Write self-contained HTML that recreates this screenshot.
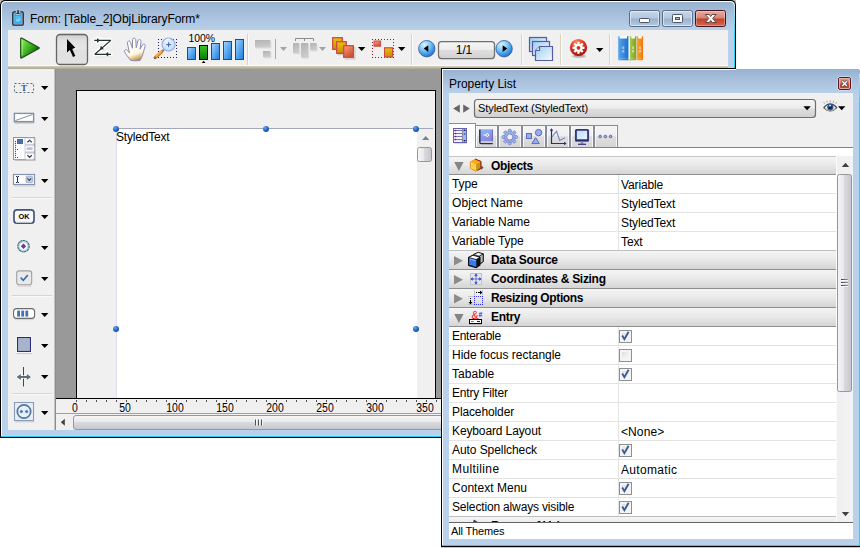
<!DOCTYPE html>
<html lang="en">
<head>
<meta charset="utf-8">
<title>Form: [Table_2]ObjLibraryForm*</title>
<style>

html,body{margin:0;padding:0;}
body{width:860px;height:548px;position:relative;overflow:hidden;background:#fff;font-family:"Liberation Sans",sans-serif;font-size:12px;color:#000;}
.abs,.abs *{position:absolute;box-sizing:border-box;}
.abs svg{overflow:visible;left:0;top:0;}
.t{white-space:nowrap;line-height:14px;letter-spacing:-0.12px;}
.b{font-weight:bold;letter-spacing:-0.3px;}
/* ---------- form window ---------- */
#fw{left:0;top:0;width:736px;height:438px;background:#000;border-radius:5px 5px 0 0;}
#fw .fr{left:1px;top:1px;width:734px;height:436px;border-radius:4.5px 4.5px 0 0;background:#fff;}
#fw .fr2{left:2px;top:2px;width:732px;height:434px;border-radius:4px 4px 0 0;background:linear-gradient(180deg,#98b3d2 0px,#a9c1dd 14px,#b7cee7 26px,#b9d1ea 30px,#b9d1ea 100%);}
#fw .cy{left:1px;top:436px;width:734px;height:1px;background:#27d0ee;}
#fw .cyr{left:734px;top:6px;width:1px;height:431px;background:linear-gradient(180deg,#b9e4f4 0,#27d0ee 30px,#27d0ee 100%);}
#fcontent{left:8px;top:30px;width:720px;height:400px;background:#f0f0f0;overflow:hidden;}
.capbtn{top:10px;height:17px;border:1px solid #5a6d85;border-radius:2.5px;background:linear-gradient(180deg,#c6d6e8 0,#b4c8de 47%,#9ab2cd 53%,#b4cae3 100%);box-shadow:inset 0 0 0 1px rgba(255,255,255,.5);}
.capbtn.close{border-color:#431422;background:linear-gradient(180deg,#e8aa9d 0,#d88574 47%,#c1412a 53%,#d4694e 100%);box-shadow:inset 0 0 0 1px rgba(255,255,255,.3);}
.sep{top:4px;width:2px;height:31px;background:linear-gradient(90deg,#d9d3c0 0,#d9d3c0 50%,#fbfbfb 50%,#fbfbfb 100%);}
.hsep{left:4px;width:40px;height:1px;background:#ddd6c2;box-shadow:0 1px 0 #fafafa;}
/* ---------- property window ---------- */
#pw{left:441px;top:68px;width:420px;height:479px;background:#000;}
#pw .fr{left:1px;top:1px;width:418px;height:477px;background:#fff;}
#pw .fr2{left:2px;top:2px;width:417px;height:476px;background:linear-gradient(180deg,#98b3d2 0px,#aec5e0 14px,#b9d1ea 25px,#b9d1ea 100%);}
#pw .cy{left:1px;top:477px;width:418px;height:1px;background:#27d0ee;}
#pw .cyr{left:418px;top:6px;width:1px;height:472px;background:linear-gradient(180deg,#b9e4f4 0,#27d0ee 30px,#27d0ee 100%);}
#pcontent{left:8px;top:25px;width:404px;height:446px;background:#f0f0f0;overflow:hidden;}
.row{left:0;width:387px;height:19px;border-bottom:1px solid #e3e3e3;background:#fff;}
.row .k{left:3px;top:2px;}
.row .v{left:172px;top:3px;}
.row .vs{left:169px;top:0;width:1px;height:18px;background:#e3e3e3;}
.hdr{left:0;width:387px;height:19px;background:linear-gradient(180deg,#f4f4f4 0,#eaeaea 45%,#d5d5d5 100%);border-bottom:1px solid #8f8f8f;}
.hdr .k{left:42px;top:2px;}
.hdr.first{border-top:1px solid #c6c6c6;}
.hdr.first .k{top:2px;}
.row.last{border-bottom-color:#bfbfbf;}
.cb{left:170px;top:3px;width:13px;height:13px;border:1px solid #8e8f8f;background:linear-gradient(135deg,#d4d7da 0,#eceeef 50%,#fdfdfd 100%);box-shadow:inset 0 0 0 2px #f4f4f4;}
.tab{top:32px;height:23px;border:1px solid #858c9c;border-bottom:none;background:linear-gradient(180deg,#f4f4f4 0,#efefef 44%,#dfdfdf 48%,#d4d4d4 100%);box-shadow:inset 1px 0 0 rgba(255,255,255,.75),inset -1px 0 0 rgba(255,255,255,.75);}

</style>
</head>
<body>
<!-- =============== FORM WINDOW =============== -->
<div class="abs" style="left:0;top:0;width:3px;height:3px;background:#bdbdbd;"></div>
<div class="abs" style="left:733px;top:0;width:3px;height:3px;background:#bdbdbd;"></div>
<div id="fw" class="abs">
  <div class="fr"></div><div class="fr2"></div><div class="cy"></div><div class="cyr"></div>
  <div class="t" style="left:30px;top:12px;letter-spacing:-0.05px;">Form: [Table_2]ObjLibraryForm*</div>
  <div class="capbtn" style="left:629px;width:31px;"></div>
  <div class="capbtn" style="left:662px;width:31px;"></div>
  <div class="capbtn close" style="left:695px;width:31px;"></div>
  <div id="fcontent">
    <!-- toolbar bottom edge -->
    <div style="left:0;top:35px;width:720px;height:1px;background:#fcfcfc;"></div>
    <div style="left:0;top:36px;width:720px;height:3px;background:linear-gradient(180deg,#d2ceb9 0,#bfbba6 50%,#a8a493 100%);"></div>
    <!-- gray work area -->
    <div style="left:48px;top:39px;width:680px;height:330px;background:#999;"></div>
    <!-- page -->
    <div style="left:68px;top:60px;width:360px;height:310px;background:#f0f0f0;border:1px solid #000;border-bottom:none;"></div>
    <!-- text object -->
    <div style="left:108px;top:98px;width:317px;height:272px;background:#f0f0f0;border-top:1px solid #a4a8bc;"></div>
    <div style="left:108px;top:99px;width:301px;height:271px;background:#fff;border-left:1px solid #dcdcec;"></div>
    <div class="t" style="left:108px;top:100px;letter-spacing:-0.2px;">StyledText</div>
    <!-- palette separator -->
    <div style="left:46px;top:39px;width:2px;height:361px;background:linear-gradient(90deg,#c2c2c2 0,#c2c2c2 50%,#8e8e8e 50%,#8e8e8e 100%);"></div>
    <div class="hsep" style="top:167px;"></div>
    <div class="hsep" style="top:265px;"></div>
    <div class="hsep" style="top:363px;"></div>
    <!-- toolbar separators -->
    <div class="sep" style="left:239px;"></div>
    <div class="sep" style="left:403px;"></div>
    <div class="sep" style="left:513px;"></div>
    <div class="sep" style="left:552px;"></div>
    <div class="sep" style="left:601px;"></div>
    <!-- ruler -->
    <div style="left:48px;top:368px;width:680px;height:16px;background:#f0f0f0;border-top:1px solid #000;border-bottom:1px solid #a0a0a0;"></div>
    <!-- hscroll -->
    <div style="left:48px;top:384px;width:680px;height:16px;background:#f0f0f0;"></div>
  </div>
  <svg width="736" height="438" viewBox="0 0 736 438">
  
<defs>
<linearGradient id="gplay" x1="0" y1="0.1" x2="0.9" y2="0.75"><stop offset="0" stop-color="#8eec5c"/><stop offset="0.4" stop-color="#4cc02c"/><stop offset="0.8" stop-color="#238a14"/><stop offset="1" stop-color="#14680c"/></linearGradient>
<linearGradient id="gbar" x1="0" y1="0" x2="1" y2="1"><stop offset="0" stop-color="#a6d6ff"/><stop offset="0.5" stop-color="#5aa8f0"/><stop offset="1" stop-color="#1f78d8"/></linearGradient>
<linearGradient id="ggreen" x1="0" y1="0" x2="0" y2="1"><stop offset="0" stop-color="#35c420"/><stop offset="1" stop-color="#0a7a08"/></linearGradient>
<linearGradient id="gyel" x1="0" y1="0" x2="0.3" y2="1"><stop offset="0" stop-color="#f6c800"/><stop offset="1" stop-color="#c68e00"/></linearGradient>
<linearGradient id="gora" x1="0" y1="0" x2="0.6" y2="1"><stop offset="0" stop-color="#faa27e"/><stop offset="1" stop-color="#d0502c"/></linearGradient>
<radialGradient id="gblue" cx="0.36" cy="0.26" r="0.85"><stop offset="0" stop-color="#d6f6ff"/><stop offset="0.35" stop-color="#8ad0f8"/><stop offset="0.7" stop-color="#3a96e4"/><stop offset="1" stop-color="#1260bc"/></radialGradient>
<radialGradient id="gred" cx="0.4" cy="0.2" r="0.85"><stop offset="0" stop-color="#fc8c5c"/><stop offset="0.45" stop-color="#e23a1c"/><stop offset="1" stop-color="#9c0a0a"/></radialGradient>
<radialGradient id="gh" cx="0.35" cy="0.3" r="0.8"><stop offset="0" stop-color="#6aa6ee"/><stop offset="0.6" stop-color="#1f62c4"/><stop offset="1" stop-color="#154a9c"/></radialGradient>
<linearGradient id="gpage" x1="0" y1="0" x2="1" y2="1"><stop offset="0" stop-color="#9ccdf0"/><stop offset="0.55" stop-color="#cfe7f8"/><stop offset="1" stop-color="#f2faff"/></linearGradient>
<linearGradient id="gbtn" x1="0" y1="0" x2="0" y2="1"><stop offset="0" stop-color="#f6f6f6"/><stop offset="0.48" stop-color="#ededed"/><stop offset="0.52" stop-color="#dedede"/><stop offset="1" stop-color="#d2d2d2"/></linearGradient>
<linearGradient id="gthumbh" x1="0" y1="0" x2="0" y2="1"><stop offset="0" stop-color="#f7f7f7"/><stop offset="0.45" stop-color="#e9e9ec"/><stop offset="0.5" stop-color="#d9dade"/><stop offset="1" stop-color="#c5c7cd"/></linearGradient>
<linearGradient id="gthumbv" x1="0" y1="0" x2="1" y2="0"><stop offset="0" stop-color="#f7f7f7"/><stop offset="0.45" stop-color="#e9e9ec"/><stop offset="0.5" stop-color="#d9dade"/><stop offset="1" stop-color="#c5c7cd"/></linearGradient>
<linearGradient id="gbk1" x1="0" y1="0" x2="1" y2="0"><stop offset="0" stop-color="#5aa6ec"/><stop offset="1" stop-color="#1b6fcc"/></linearGradient>
<linearGradient id="gbk2" x1="0" y1="0" x2="1" y2="0"><stop offset="0" stop-color="#a6cc48"/><stop offset="1" stop-color="#78a020"/></linearGradient>
<linearGradient id="gbk3" x1="0" y1="0" x2="1" y2="0"><stop offset="0" stop-color="#ffa030"/><stop offset="1" stop-color="#f07808"/></linearGradient>
<linearGradient id="ghand" x1="0.2" y1="0" x2="0.5" y2="1"><stop offset="0" stop-color="#fffce0"/><stop offset="0.35" stop-color="#ffffff"/><stop offset="0.72" stop-color="#fdf8e4"/><stop offset="0.9" stop-color="#dcb878"/><stop offset="1" stop-color="#b88c48"/></linearGradient>
<radialGradient id="glens" cx="0.45" cy="0.4" r="0.65"><stop offset="0" stop-color="#e8f6ff"/><stop offset="0.7" stop-color="#c4e4ff"/><stop offset="1" stop-color="#acd0fc"/></radialGradient>
<linearGradient id="gdis" x1="0" y1="0" x2="0.3" y2="1"><stop offset="0" stop-color="#b2b2b2"/><stop offset="1" stop-color="#cbcbcb"/></linearGradient>
<linearGradient id="gsel" x1="0" y1="0" x2="0" y2="1"><stop offset="0" stop-color="#cfcfcf"/><stop offset="0.2" stop-color="#e0e0e0"/><stop offset="0.48" stop-color="#e6e6e6"/><stop offset="0.52" stop-color="#e0e0e0"/><stop offset="1" stop-color="#e2e2e2"/></linearGradient>
</defs>

  <rect x="14.3" y="13.1" width="7.4" height="10.7" fill="#2aa8ea"/><rect x="16" y="12.6" width="4" height="2.4" fill="#a9c2de"/>
<rect x="15.4" y="16" width="5.2" height="6.4" fill="#52bcf0"/><path d="M16.4,19.6 l1.3,1.4 l2.3,-2.6" stroke="#d2eeff" stroke-width="0.9" fill="none"/>
<path d="M15.9,11.8 H14 Q12.8,11.8 12.8,13 V23.9 Q12.8,25.1 14,25.1 H22 Q23.2,25.1 23.2,23.9 V13 Q23.2,11.8 22,11.8 H20.3" fill="none" stroke="#1f2327" stroke-width="1.3"/>
<path d="M17.3,10.2 h1.6 v3 h1 v0.9 h-3.8 v-0.9 h1.2z" fill="#2c3034"/>
<rect x="639.5" y="18.5" width="10" height="4" rx="0.8" fill="#fff" stroke="#4c5666"/>
<rect x="672.5" y="14.5" width="10" height="8" rx="0.8" fill="#fff" stroke="#4c5666"/><rect x="675.5" y="17.5" width="4" height="2" fill="#a8bcd4" stroke="#4c5666"/>
<path d="M705.3,14.5 h3.9 l1.5,2 l1.5,-2 h3.9 l-3.5,4 l3.5,4 h-3.9 l-1.5,-2 l-1.5,2 h-3.9 l3.5,-4 z" fill="#fff" stroke="#4c3a40" stroke-width="0.9" stroke-linejoin="round"/>
  <path d="M21.3,38.6 L38.6,48 L21.3,57.4 Z" fill="url(#gplay)" stroke="#184a10" stroke-width="2.4" stroke-linejoin="round"/>
<path d="M21.5,38.9 L38.2,48 L21.5,57.1 Z" fill="url(#gplay)" stroke="url(#gplay)" stroke-width="0.6" stroke-linejoin="round"/>
<path d="M22.3,40.6 V55" stroke="#a8f478" stroke-width="1" opacity="0.75"/>
<rect x="56.5" y="34.5" width="31" height="30" rx="3.5" fill="url(#gsel)" stroke="#646464" stroke-width="1.3"/>
<path d="M67.6,39.6 L67.6,53.1 L70.5,50.5 L73.6,57.6 L76,56.5 L72.9,49.6 L75.9,48.4 Z" fill="#fff" opacity="0.7"/>
<path d="M67,39 L67,52.5 L69.9,49.9 L73,57 L75.4,55.9 L72.3,49 L75.3,47.8 Z" fill="#000"/>
<g stroke="#fff" stroke-width="4.2" fill="none" stroke-linejoin="round" stroke-linecap="round" opacity="0.95"><path d="M94.5,40.4 H110.6 L94.8,54.3 H110.8"/><path d="M97.4,38.4 v4.2 M107.8,52.2 v4.2"/></g>
<path d="M95.5,57 H111" stroke="#c8c8c8" stroke-width="1" opacity="0.45"/>
<g stroke="#273232" stroke-width="1.25" fill="none" stroke-linejoin="bevel"><path d="M94.2,40.4 H110.8 L94.8,54.3 H111"/></g>
<g fill="#273232"><path d="M99.8,40.4 L97,37.9 V42.9 Z"/><path d="M99.8,49.8 L103.9,49.3 L100.9,45.8 Z"/><path d="M105.4,54.3 L108.2,51.8 V56.8 Z"/></g>
<path d="M130.6,60.3 C128,57 125.8,54.2 124.7,52 C123.9,50.2 125.9,48.9 127.4,50.4 L129.4,52.8 L127.4,43 C127,40.9 129.9,40.2 130.5,42.3 L132.4,48.2 L132.5,39.8 C132.5,37.6 135.7,37.6 135.8,39.8 L136.2,47.8 L137.9,40.9 C138.4,38.8 141.3,39.4 141,41.5 L140,49.2 L142.4,45 C143.4,43.2 145.8,44.2 145.1,46.2 C143.9,50 143.3,53 142.4,55.6 C141.7,57.6 140.8,59 140.2,60.3 C137,60.9 133.6,60.9 130.6,60.3 Z" fill="url(#ghand)" stroke="#8a8ab4" stroke-width="1" stroke-linejoin="round"/>
<g stroke="#1c1c5c" stroke-width="1" stroke-dasharray="1,2" fill="none"><path d="M158,39.5 H177"/><path d="M158,57.5 H177"/><path d="M158.5,39 V58"/><path d="M176.5,39 V58"/></g>
<path d="M163.4,50.2 L161.6,51.8" stroke="#8c8c94" stroke-width="2.4" stroke-linecap="round"/>
<path d="M161.6,51.8 L155.2,57.6" stroke="#c87414" stroke-width="3" stroke-linecap="round"/><path d="M161.4,51.5 L155.3,57" stroke="#ffac3c" stroke-width="1.7" stroke-linecap="round"/>
<path d="M155.2,57.6 L154.8,58" stroke="#74706c" stroke-width="2.2" stroke-linecap="round"/>
<circle cx="168.6" cy="44.6" r="6.5" fill="url(#glens)" stroke="#9cacdc" stroke-width="1.1"/>
<path d="M164.8,41.6 q1.6,-2.6 4.6,-2.6" stroke="#fff" stroke-width="1.4" fill="none" opacity="0.9"/>
<path d="M166.2,44.6 h5 M168.7,42.1 v5" stroke="#3c4c84" stroke-width="0.9"/>
<rect x="187.5" y="47.5" width="8" height="12" fill="url(#gbar)" stroke="#1848a8"/>
<rect x="211.5" y="43.5" width="8" height="16" fill="url(#gbar)" stroke="#1848a8"/>
<rect x="223.5" y="41.5" width="8" height="18" fill="url(#gbar)" stroke="#1848a8"/>
<rect x="235.5" y="39.5" width="8" height="20" fill="url(#gbar)" stroke="#1848a8"/>
<rect x="199.5" y="45.5" width="8" height="14" fill="url(#ggreen)" stroke="#000"/>
<path d="M201.8,63 h3.6 l-1.8,-2.2 z" fill="#000"/>
<g fill="#dedede"><rect x="256" y="41" width="15.4" height="7.6"/><rect x="264" y="52" width="7.4" height="6.4"/></g>
<g fill="url(#gdis)"><rect x="255" y="40" width="15.4" height="7.4"/><rect x="263" y="51" width="7.4" height="6.2"/></g>
<path d="M275.5,39 v20" stroke="#a8a8a8"/>
<path d="M280,47 h7 l-3.5,4 z" fill="#a4a4a4"/>
<path d="M295.5,41 v-2.5 h18 v2.5 M304.5,38.5 v2.5" stroke="#8c8c8c" fill="none"/>
<g fill="#dedede"><rect x="294" y="44" width="6.2" height="10.4"/><rect x="302" y="44" width="7.2" height="14.6"/><rect x="311.2" y="44" width="6.4" height="7.6"/></g>
<g fill="url(#gdis)"><rect x="293" y="43" width="6.2" height="10.2"/><rect x="301" y="43" width="7.2" height="14.6"/><rect x="310.2" y="43" width="6.4" height="7.4"/></g>
<path d="M319,47 h7 l-3.5,4 z" fill="#a4a4a4"/>
<path d="M343.8,50.2 v4.4 h-6.2 M354.8,47 v11.8 h-10" stroke="#b8b8b8" stroke-width="1.2" fill="none" opacity="0.7"/>
<rect x="332.7" y="37.7" width="9.6" height="11.6" fill="url(#gyel)" stroke="#ca4a48" stroke-width="1.3"/>
<rect x="336.7" y="41.7" width="9.6" height="11.6" fill="url(#gyel)" stroke="#ca4a48" stroke-width="1.3"/>
<rect x="343.7" y="45.7" width="9.6" height="11.6" fill="url(#gora)" stroke="#ca4a48" stroke-width="1.3"/>
<path d="M358,47 h7.4 l-3.7,4 z" fill="#000"/>
<g stroke="#a81414" stroke-width="1" stroke-dasharray="1,2" fill="none"><path d="M372,39.5 H394"/><path d="M372,57.5 H394"/><path d="M372.5,39 V58"/><path d="M393.5,39 V58"/></g>
<rect x="374" y="41" width="6.6" height="5.2" fill="url(#gora)" stroke="#ca4a48" stroke-width="1"/>
<rect x="384.6" y="47.8" width="8" height="9.2" fill="url(#gyel)" stroke="#ca4a48" stroke-width="1.2"/>
<path d="M398,47 h7.4 l-3.7,4 z" fill="#000"/>
<circle cx="426.8" cy="48.7" r="8.2" fill="url(#gblue)" stroke="#3c54a4" stroke-width="0.8"/>
<path d="M428.3,45.2 v6.8 l-4.6,-3.4 z" fill="#000"/>
<rect x="438.5" y="41.5" width="56" height="17" rx="3" fill="url(#gbtn)" stroke="#6e6e6e" stroke-width="1.25"/>
<circle cx="504.1" cy="48.7" r="8.2" fill="url(#gblue)" stroke="#3c54a4" stroke-width="0.8"/>
<path d="M502.6,45.2 v6.8 l4.6,-3.4 z" fill="#000"/>
<g fill="url(#gpage)" stroke="#5a5aa2" stroke-width="1.2"><rect x="529.5" y="37.5" width="17" height="14"/><rect x="532.5" y="41.5" width="17" height="14"/><path d="M539.5,46.5 H552.5 V60.5 H535.5 V50.5 Z"/><path d="M535.5,50.5 h4 v-4" fill="#d8ecff"/></g>
<ellipse cx="579" cy="56.2" rx="7.4" ry="2" fill="#000" opacity="0.14"/><ellipse cx="579" cy="56" rx="5.6" ry="1.4" fill="#000" opacity="0.14"/>
<circle cx="578.5" cy="47.5" r="8.6" fill="url(#gred)"/>
<g fill="#fff"><rect x="577.35" y="41.80" width="2.3" height="3" transform="rotate(0 578.5 47.8)"/><rect x="577.35" y="41.80" width="2.3" height="3" transform="rotate(45 578.5 47.8)"/><rect x="577.35" y="41.80" width="2.3" height="3" transform="rotate(90 578.5 47.8)"/><rect x="577.35" y="41.80" width="2.3" height="3" transform="rotate(135 578.5 47.8)"/><rect x="577.35" y="41.80" width="2.3" height="3" transform="rotate(180 578.5 47.8)"/><rect x="577.35" y="41.80" width="2.3" height="3" transform="rotate(225 578.5 47.8)"/><rect x="577.35" y="41.80" width="2.3" height="3" transform="rotate(270 578.5 47.8)"/><rect x="577.35" y="41.80" width="2.3" height="3" transform="rotate(315 578.5 47.8)"/><circle cx="578.5" cy="47.8" r="4.1"/></g>
<circle cx="578.5" cy="47.8" r="1.9" fill="#d8301c"/>
<path d="M596,48 h7.4 l-3.7,4 z" fill="#000"/>
<ellipse cx="629.5" cy="60" rx="2" ry="0.9" fill="#000" opacity="0.15"/>
<rect x="619.4" y="36.2" width="7.8" height="2.6" fill="#fff"/><path d="M618.2,36.3 h1.4 V38.4 h7.4 V36.3 h1.4 V59.2 q0,1.1 -1.1,1.1 h-8.0 q-1.1,0 -1.1,-1.1 Z" fill="url(#gbk1)"/><path d="M622.3,46.6 h2 v2.4 h-2z M622.3,50 h2 v2.4 h-2z" fill="#fff" opacity="0.5"/><path d="M619.0,58.6 h8.6" stroke="#fff" stroke-width="1" opacity="0.22"/>
<rect x="631.2" y="36.2" width="3.9" height="2.6" fill="#fff"/><path d="M630,36.3 h1.4 V38.4 h3.5 V36.3 h1.4 V59.2 q0,1.1 -1.1,1.1 h-4.1 q-1.1,0 -1.1,-1.1 Z" fill="url(#gbk2)"/><path d="M632.1,46.6 h2 v2.4 h-2z M632.1,50 h2 v2.4 h-2z" fill="#fff" opacity="0.5"/><path d="M630.8,58.6 h4.7" stroke="#fff" stroke-width="1" opacity="0.22"/>
<rect x="638.0" y="36.2" width="3.9" height="2.6" fill="#fff"/><path d="M636.8,36.3 h1.4 V38.4 h3.5 V36.3 h1.4 V59.2 q0,1.1 -1.1,1.1 h-4.1 q-1.1,0 -1.1,-1.1 Z" fill="url(#gbk3)"/><path d="M639.0,46.6 h2 v2.4 h-2z M639.0,50 h2 v2.4 h-2z" fill="#fff" opacity="0.5"/><path d="M637.5999999999999,58.6 h4.7" stroke="#fff" stroke-width="1" opacity="0.22"/>
  <rect x="14.5" y="83.5" width="19" height="9" fill="none" stroke="#54687c" stroke-dasharray="2,2"/>
<path d="M41,86 h7.4 l-3.7,4 z" fill="#000"/>
<rect x="14.4" y="113.4" width="19.2" height="8.2" fill="#fff" stroke="#8292a6" stroke-width="1.4"/><path d="M15.5,120.5 L32.5,114.5" stroke="#7484a0" stroke-width="0.9"/><path d="M14.5,122.8 h19.8" stroke="#a8acb2" stroke-width="1.2"/>
<path d="M41,117 h7.4 l-3.7,4 z" fill="#000"/>
<rect x="14.5" y="138.5" width="21" height="22.3" fill="#a4a4a4" opacity="0.75"/>
<rect x="13.5" y="137.5" width="21" height="22" fill="#c4c8d2" stroke="#8098b0" stroke-width="1"/>
<path d="M34.5,138 V159.5 H14" stroke="#a0a4a8" fill="none"/>
<rect x="14" y="138" width="10.6" height="21" fill="#fff"/>
<rect x="17" y="139" width="6" height="5" fill="#4a6ca8"/>
<g fill="#383838"><rect x="15" y="140.9" width="1" height="1"/><rect x="15" y="142.9" width="1" height="1"/><rect x="15" y="144.9" width="1" height="1"/><rect x="15" y="146.9" width="1" height="1"/><rect x="15" y="148.9" width="1" height="1"/><rect x="15" y="150.9" width="1" height="1"/><rect x="15" y="152.9" width="1" height="1"/><rect x="15" y="154.9" width="1" height="1"/><rect x="15" y="156.9" width="1" height="1"/><rect x="17" y="148.9" width="1" height="1"/><rect x="17" y="156.9" width="1" height="1"/></g>
<g fill="#fff" stroke="#d4dcec" stroke-width="0.7"><rect x="25.2" y="138.2" width="8.8" height="5.8" rx="1.2"/><rect x="25.2" y="145.8" width="8.8" height="5.8" rx="1.2"/><rect x="25.2" y="153.4" width="8.8" height="5.8" rx="1.2"/></g>
<rect x="26.4" y="147.2" width="6.4" height="2.8" rx="1.2" fill="#b4c4e4"/>
<path d="M27.4,142.3 l2.2,-2 l2.2,2 M27.4,155.3 l2.2,2 l2.2,-2" stroke="#3c4454" stroke-width="1.3" fill="none"/>
<path d="M41,148 h7.4 l-3.7,4 z" fill="#000"/>
<rect x="13.5" y="174.5" width="21" height="10" fill="#fff" stroke="#8494ac" stroke-width="1.2"/><path d="M14,186 h21.5" stroke="#c4c8d0"/>
<path d="M17.5,176.5 v6 M16,176.5 h1 M18,176.5 h1 M16,182.5 h1 M18,182.5 h1" stroke="#203060" stroke-width="1"/>
<rect x="26" y="176.2" width="6.6" height="6.4" rx="1" fill="#c4cce4" stroke="#9aa6c0" stroke-width="0.8"/><path d="M27.4,178.4 l1.9,1.9 l1.9,-1.9" stroke="#304878" stroke-width="1.2" fill="none"/>
<path d="M41,179 h7.4 l-3.7,4 z" fill="#000"/>
<rect x="14" y="209.8" width="20" height="13.4" rx="3" fill="#fafafa" stroke="#43557e" stroke-width="1.7"/><path d="M16,222.2 h16" stroke="#d8dce4"/>
<path d="M41,215 h7.4 l-3.7,4 z" fill="#000"/>
<circle cx="23.5" cy="246.2" r="5.7" fill="#b4dcee" stroke="#4c6478" stroke-width="1.15" stroke-dasharray="2.4,0.45"/><circle cx="23.5" cy="246.2" r="3.7" fill="#f6faff"/><path d="M23.5,243.5 l2.7,2.7 l-2.7,2.7 l-2.7,-2.7z" fill="#6c3a90"/>
<path d="M41,246 h7.4 l-3.7,4 z" fill="#000"/>
<rect x="16.7" y="270.9" width="15" height="13.8" rx="2.5" fill="#e9e9e9" stroke="#a0a0a0" stroke-width="1.1"/><path d="M17.5,286 h14" stroke="#c8c8c8"/>
<path d="M20.7,277.6 l2.5,2.7 l4.6,-5.2" stroke="#3c6ea0" stroke-width="1.6" fill="none"/>
<path d="M41,277 h7.4 l-3.7,4 z" fill="#000"/>
<rect x="13.6" y="308.6" width="21" height="9.8" rx="3" fill="#fff" stroke="#6c6c6c" stroke-width="1.1"/><path d="M15,319.6 h19" stroke="#d4d4d4"/>
<g fill="#4474ac"><rect x="17.2" y="310.6" width="2.8" height="6"/><rect x="21.3" y="310.6" width="2.8" height="6"/><rect x="25.4" y="310.6" width="2.8" height="6"/></g>
<path d="M41,313 h7.4 l-3.7,4 z" fill="#000"/>
<rect x="16" y="336" width="16" height="17" fill="#fff" opacity="0.9"/><path d="M16.5,353.6 h15.5" stroke="#c8c8c8"/>
<rect x="17.5" y="337.5" width="13" height="14" fill="#a7b3cb" stroke="#2c2c7c" stroke-width="1.1"/>
<path d="M41,344 h7.4 l-3.7,4 z" fill="#000"/>
<path d="M23.5,367 v19.5" stroke="#404848" stroke-width="1"/>
<path d="M16.4,377 l4.4,-3.4 v2.4 h5.6 v-2.4 l4.4,3.4 l-4.4,3.4 v-2.4 h-5.6 v2.4z" fill="#fff" opacity="0.8" stroke="#fff" stroke-width="1.4"/><path d="M16.6,377 l4.2,-3 v2 h6 v-2 l4.2,3 l-4.2,3 v-2 h-6 v2z" fill="#5c7078"/>
<path d="M41,375 h7.4 l-3.7,4 z" fill="#000"/>
<rect x="14.5" y="402.5" width="19" height="18" fill="#e9eff8" stroke="#8c9cb4" stroke-width="1.1"/><path d="M15,421.8 h19.5" stroke="#c4c8d0"/>
<circle cx="24" cy="411.5" r="6.7" fill="none" stroke="#4e78a2" stroke-width="1.7"/><circle cx="21.4" cy="411.5" r="1.5" fill="#4e78a2"/><circle cx="26.6" cy="411.5" r="1.5" fill="#4e78a2"/>
<path d="M41,411 h7.4 l-3.7,4 z" fill="#000"/>
  <path d="M76.5,400 v2 M86.5,400 v2 M96.5,400 v2 M106.5,400 v2 M116.5,400 v2 M126.5,400 v2 M136.5,400 v2 M146.5,400 v2 M156.5,400 v2 M166.5,400 v2 M176.5,400 v2 M186.5,400 v2 M196.5,400 v2 M206.5,400 v2 M216.5,400 v2 M226.5,400 v2 M236.5,400 v2 M246.5,400 v2 M256.5,400 v2 M266.5,400 v2 M276.5,400 v2 M286.5,400 v2 M296.5,400 v2 M306.5,400 v2 M316.5,400 v2 M326.5,400 v2 M336.5,400 v2 M346.5,400 v2 M356.5,400 v2 M366.5,400 v2 M376.5,400 v2 M386.5,400 v2 M396.5,400 v2 M406.5,400 v2 M416.5,400 v2 M426.5,400 v2 M436.5,400 v2 " stroke="#505050" stroke-width="1" fill="none"/>
<circle cx="116" cy="129" r="3" fill="url(#gh)"/>
<circle cx="266" cy="129" r="3" fill="url(#gh)"/>
<circle cx="416" cy="129" r="3" fill="url(#gh)"/>
<circle cx="116" cy="329" r="3" fill="url(#gh)"/>
<circle cx="416" cy="329" r="3" fill="url(#gh)"/>
<path d="M422,140 h7.4 l-3.7,-4 z" fill="#808080"/>
<rect x="417.5" y="147.5" width="14" height="14" rx="2" fill="url(#gthumbv)" stroke="#969696"/>
<path d="M64.8,418.8 v7 l-4,-3.5 z" fill="#404040"/>
<rect x="73.5" y="415.5" width="420" height="14" rx="2.5" fill="url(#gthumbh)" stroke="#979797"/>
<path d="M255.5,419.5 v6 M258.5,419.5 v6 M261.5,419.5 v6" stroke="#505050"/><path d="M256.5,419.5 v6 M259.5,419.5 v6 M262.5,419.5 v6" stroke="#fff" opacity="0.7"/>
  </svg>
  <div class="t" style="left:188.5px;top:31.5px;font-size:10.4px;letter-spacing:-0.05px;">100%</div>
  <div class="t" style="left:435.5px;top:43px;width:57px;text-align:center;">1/1</div>
  <div class="t b" style="left:16px;top:209.5px;width:16px;text-align:center;font-size:7.3px;letter-spacing:0;">OK</div>
  <div class="t b" style="left:14px;top:80.6px;width:20px;text-align:center;font-family:'Liberation Serif',serif;font-size:9px;color:#3c5488;letter-spacing:0;">T</div>
  <div class="t rl" style="left:55.3px;top:401px;width:40px;text-align:center;transform:scaleX(0.87);letter-spacing:0;">0</div><div class="t rl" style="left:105.3px;top:401px;width:40px;text-align:center;transform:scaleX(0.87);letter-spacing:0;">50</div><div class="t rl" style="left:155.3px;top:401px;width:40px;text-align:center;transform:scaleX(0.87);letter-spacing:0;">100</div><div class="t rl" style="left:205.3px;top:401px;width:40px;text-align:center;transform:scaleX(0.87);letter-spacing:0;">150</div><div class="t rl" style="left:255.3px;top:401px;width:40px;text-align:center;transform:scaleX(0.87);letter-spacing:0;">200</div><div class="t rl" style="left:305.3px;top:401px;width:40px;text-align:center;transform:scaleX(0.87);letter-spacing:0;">250</div><div class="t rl" style="left:355.3px;top:401px;width:40px;text-align:center;transform:scaleX(0.87);letter-spacing:0;">300</div><div class="t rl" style="left:405.3px;top:401px;width:40px;text-align:center;transform:scaleX(0.87);letter-spacing:0;">350</div>
</div>
<!-- =============== PROPERTY WINDOW =============== -->
<div id="pw" class="abs">
  <div class="fr"></div><div class="fr2"></div><div class="cy"></div><div class="cyr"></div>
  <div style="left:295px;top:0;width:125px;height:1px;background:#fff;"></div>
  <div style="left:295px;top:1px;width:123px;height:1px;background:#98b3d2;"></div>
  <div class="t" style="left:8px;top:9px;letter-spacing:-0.03px;">Property List</div>
  <div id="pcontent">
    <!-- tab strip -->
    <div class="tab" style="left:27px;width:22px;border-left:none;"></div><div class="tab" style="left:49px;width:24px;"></div><div class="tab" style="left:73px;width:24px;"></div><div class="tab" style="left:97px;width:24px;"></div><div class="tab" style="left:121px;width:24px;"></div><div class="tab" style="left:145px;width:24px;"></div>
    <div style="left:0;top:54px;width:404px;height:1px;background:#7e8290;"></div>
    <div style="left:0;top:55px;width:404px;height:8px;background:#fff;"></div>
    <div style="left:0;top:30px;width:27px;height:25px;background:#fff;border-top:1px solid #8a8e98;border-right:1px solid #8a8e98;"></div>
    <!-- list -->
    <div id="plist" style="left:0;top:63px;width:387px;height:366px;background:#fff;overflow:hidden;">
      <div class="hdr first" style="top:0px;"><div class="t b k">Objects</div></div>
      <div class="row" style="top:19px;"><div class="t k">Type</div><div class="vs"></div><div class="t v">Variable</div></div>
      <div class="row" style="top:38px;"><div class="t k" style="letter-spacing:0.08px;">Object Name</div><div class="vs"></div><div class="t v">StyledText</div></div>
      <div class="row" style="top:57px;"><div class="t k" style="letter-spacing:-0.04px;">Variable Name</div><div class="vs"></div><div class="t v">StyledText</div></div>
      <div class="row last" style="top:76px;"><div class="t k" style="letter-spacing:-0.04px;">Variable Type</div><div class="vs"></div><div class="t v">Text</div></div>
      <div class="hdr" style="top:95px;"><div class="t b k">Data Source</div></div>
      <div class="hdr" style="top:114px;"><div class="t b k">Coordinates &amp; Sizing</div></div>
      <div class="hdr" style="top:133px;"><div class="t b k" style="letter-spacing:-0.37px;">Resizing Options</div></div>
      <div class="hdr" style="top:152px;"><div class="t b k">Entry</div></div>
      <div class="row" style="top:171px;"><div class="t k" style="letter-spacing:-0.28px;">Enterable</div><div class="vs"></div><div class="cb"></div></div>
      <div class="row" style="top:190px;"><div class="t k" style="letter-spacing:-0.02px;">Hide focus rectangle</div><div class="vs"></div><div class="cb"></div></div>
      <div class="row" style="top:209px;"><div class="t k" style="letter-spacing:0.04px;">Tabable</div><div class="vs"></div><div class="cb"></div></div>
      <div class="row" style="top:228px;"><div class="t k" style="letter-spacing:-0.19px;">Entry Filter</div><div class="vs"></div></div>
      <div class="row" style="top:247px;"><div class="t k">Placeholder</div><div class="vs"></div></div>
      <div class="row" style="top:266px;"><div class="t k">Keyboard Layout</div><div class="vs"></div><div class="t v" style="letter-spacing:0.1px;">&lt;None&gt;</div></div>
      <div class="row" style="top:285px;"><div class="t k" style="letter-spacing:-0.07px;">Auto Spellcheck</div><div class="vs"></div><div class="cb"></div></div>
      <div class="row" style="top:304px;"><div class="t k" style="letter-spacing:0.38px;">Multiline</div><div class="vs"></div><div class="t v" style="letter-spacing:0.33px;">Automatic</div></div>
      <div class="row" style="top:323px;"><div class="t k" style="letter-spacing:0.03px;">Context Menu</div><div class="vs"></div><div class="cb"></div></div>
      <div class="row last" style="top:342px;"><div class="t k" style="letter-spacing:-0.16px;">Selection always visible</div><div class="vs"></div><div class="cb"></div></div>
      <div class="hdr" style="top:361px;"><div class="t b k">Range of Values</div></div>
    </div>
    <div style="left:387px;top:63px;width:1px;height:366px;background:#fbfbfb;"></div>
    <div style="left:388px;top:63px;width:16px;height:366px;background:linear-gradient(90deg,#efefef,#f3f3f3);"></div>
    <!-- status -->
    <div style="left:0;top:429px;width:404px;height:1px;background:#646464;"></div>
    <div style="left:0;top:430px;width:404px;height:16px;background:#fff;"></div>
    <div class="t" style="left:2px;top:431px;font-size:11px;letter-spacing:-0.15px;">All Themes</div>
  </div>
  <svg width="420" height="479" viewBox="441 68 420 479">
  <defs>
<linearGradient id="pcombo" x1="0" y1="0" x2="0" y2="1"><stop offset="0" stop-color="#f5f5f5"/><stop offset="0.48" stop-color="#ececec"/><stop offset="0.52" stop-color="#dedede"/><stop offset="1" stop-color="#d0d0d0"/></linearGradient>
<linearGradient id="pthumb" x1="0" y1="0" x2="1" y2="0"><stop offset="0" stop-color="#f6f6f6"/><stop offset="0.45" stop-color="#e8e8ec"/><stop offset="0.5" stop-color="#d8d9de"/><stop offset="1" stop-color="#c6c8ce"/></linearGradient>
<linearGradient id="pbook" x1="0" y1="0" x2="0.3" y2="1"><stop offset="0" stop-color="#8cb8fa"/><stop offset="1" stop-color="#8a88da"/></linearGradient>
<linearGradient id="pscr" x1="0" y1="0" x2="1" y2="1"><stop offset="0" stop-color="#b4e0ff"/><stop offset="1" stop-color="#f0f2ff"/></linearGradient>
<linearGradient id="pgear" gradientUnits="userSpaceOnUse" x1="0" y1="129" x2="0" y2="145"><stop offset="0" stop-color="#9cc0f6"/><stop offset="1" stop-color="#9898d8"/></linearGradient>
</defs>
<rect x="837.5" y="76.5" width="14" height="14" rx="3" fill="none" stroke="#cfe4f8" stroke-width="1" opacity="0.8"/>
<rect x="838.5" y="77.5" width="12" height="12" rx="1.8" fill="#c9492e" stroke="#4a1222"/>
<rect x="839" y="78" width="11" height="5.4" fill="#e08c76"/>
<rect x="839.5" y="78.5" width="10" height="10" rx="0.6" fill="none" stroke="#f2b8a8" stroke-width="1" opacity="0.85"/>
<path d="M842,81 l5.2,5.2 M847.2,81 l-5.2,5.2" stroke="#544450" stroke-width="2.9"/><path d="M842.3,81.3 l4.6,4.6 M846.9,81.3 l-4.6,4.6" stroke="#fff" stroke-width="1.45"/>
<path d="M459.8,104.4 v8.4 l-6.6,-4.2 z M463.2,104.4 v8.4 l6.6,-4.2 z" fill="#666"/>
<rect x="474.5" y="99.5" width="341" height="18" rx="3" fill="url(#pcombo)" stroke="#6e6e6e" stroke-width="1.2"/>
<path d="M803.4,106.2 h7.4 l-3.7,4 z" fill="#000"/>
<path d="M824.6,103.6 l-0.9,-1.5 M827.2,102.6 l-0.5,-1.8 M830.2,102.3 v-1.9 M833.2,102.6 l0.5,-1.8 M835.8,103.6 l0.9,-1.5" stroke="#8c8c8c" stroke-width="0.8"/>
<path d="M823.8,107.6 Q830.2,100.2 836.8,107.6 Q830.2,114.4 823.8,107.6 Z" fill="#fbf4ec" stroke="#4a4a4a" stroke-width="1.2" stroke-linejoin="round"/>
<path d="M825.2,108.4 Q830.2,113.2 835.4,108.4" stroke="#e4c4a0" stroke-width="1" fill="none"/>
<circle cx="830.3" cy="107.3" r="3.1" fill="#1452a4"/><circle cx="830.3" cy="107.5" r="1.5" fill="#061e54"/><circle cx="830" cy="105.6" r="0.9" fill="#fff"/>
<path d="M838,106.2 h7.4 l-3.7,4 z" fill="#000"/>
<rect x="453.5" y="128.5" width="13" height="14" fill="#f0f0ff" stroke="#6464ac"/>
<path d="M454,130.5 h8.5 M454,133.5 h8.5 M454,136.5 h8.5 M454,139.5 h8.5" stroke="#7474bc"/>
<rect x="462.5" y="128.5" width="4" height="14" fill="#a6b2f0" stroke="#6464ac"/><path d="M462.5,129 v13" stroke="#8c8c9c"/>
<circle cx="464.6" cy="133.9" r="1" fill="#2c7cc8"/>
<path d="M463.2,131 l1.4,-1.8 l1.4,1.8z M463.2,140 l1.4,1.8 l1.4,-1.8z" fill="#24246c"/>
<g fill="#c80c0c"><circle cx="455.5" cy="130.5" r="0.85"/><circle cx="455.5" cy="133.5" r="0.85"/><circle cx="455.5" cy="136.5" r="0.85"/><circle cx="455.5" cy="139.5" r="0.85"/></g>
<path d="M454,143.6 h13" stroke="#d8d8d8"/>
<path d="M480,129.2 h12.2 q0.6,0 0.6,0.6 v12 h-12.8z" fill="url(#pbook)"/>
<path d="M492.3,129.6 v12" stroke="#5c5cac" stroke-width="0.9"/>
<path d="M480.4,141.6 h12.4 v1.6 h-12.4z" fill="#fff"/>
<path d="M479.8,129.6 v12.6 q0,1.4 1.6,1.4 h11.4" stroke="#2c2c64" stroke-width="1.5" fill="none"/>
<circle cx="487.2" cy="135" r="1.4" fill="none" stroke="#fff" stroke-width="1"/><path d="M483.4,135 h2.2" stroke="#fff" stroke-width="1"/>
<g fill="url(#pgear)" stroke="#6a78c4" stroke-width="0.7"><rect x="508.30" y="129.30" width="3" height="3.4" rx="1" transform="rotate(0 509.8 137)"/><rect x="508.30" y="129.30" width="3" height="3.4" rx="1" transform="rotate(45 509.8 137)"/><rect x="508.30" y="129.30" width="3" height="3.4" rx="1" transform="rotate(90 509.8 137)"/><rect x="508.30" y="129.30" width="3" height="3.4" rx="1" transform="rotate(135 509.8 137)"/><rect x="508.30" y="129.30" width="3" height="3.4" rx="1" transform="rotate(180 509.8 137)"/><rect x="508.30" y="129.30" width="3" height="3.4" rx="1" transform="rotate(225 509.8 137)"/><rect x="508.30" y="129.30" width="3" height="3.4" rx="1" transform="rotate(270 509.8 137)"/><rect x="508.30" y="129.30" width="3" height="3.4" rx="1" transform="rotate(315 509.8 137)"/></g>
<circle cx="509.8" cy="137" r="4.3" fill="none" stroke="url(#pgear)" stroke-width="2.3"/>
<circle cx="509.8" cy="137" r="5.5" fill="none" stroke="#6a78c4" stroke-width="0.5"/><circle cx="509.8" cy="137" r="3.1" fill="#ececf4" stroke="#6470b8" stroke-width="0.8"/>
<g fill="#98acec" stroke="#5c6cc0" stroke-width="1"><rect x="526.5" y="133.5" width="5" height="5"/><circle cx="538.6" cy="132.6" r="3.2"/><path d="M535.6,137.6 l3.7,6 h-7.4z"/></g>
<path d="M551.5,129.5 v14 h14" stroke="#2c2c70" stroke-width="1.2" fill="none"/><path d="M551.5,128.2 l-1.8,2.6 h3.6z M566.6,143.5 l-2.6,-1.8 v3.6z" fill="#2c2c70"/>
<path d="M552,137 l4.6,-5.8 l3,9.2 l5.4,-2.6" stroke="#7484c4" stroke-width="1.1" fill="none"/>
<rect x="575.9" y="129.9" width="12.2" height="10.4" rx="0.6" fill="url(#pscr)" stroke="#36367a" stroke-width="1.9"/><path d="M575.2,140.9 h13.6" stroke="#22225c" stroke-width="1.1"/>
<path d="M581,141.5 h2 l0.6,2.2 h-3.2z" fill="#7c8cd0"/><path d="M578,144.3 h8" stroke="#3c3c80" stroke-width="1.3"/>
<g fill="#a4acdc" stroke="#4c5c9c" stroke-width="0.9"><circle cx="600.2" cy="136.5" r="1.3"/><circle cx="605.4" cy="136.5" r="1.3"/><circle cx="610.6" cy="136.5" r="1.3"/></g>
<path d="M841.8,167 h7.4 l-3.7,-4.2 z" fill="#404040"/>
<path d="M841.8,512 h7.4 l-3.7,4.2 z" fill="#404040"/>
<rect x="837.5" y="174.5" width="14" height="217" rx="2" fill="url(#pthumb)" stroke="#979797"/>
<linearGradient id="pgrip" gradientUnits="userSpaceOnUse" x1="841" y1="0" x2="848" y2="0"><stop offset="0" stop-color="#3c3c3c"/><stop offset="1" stop-color="#9c9ca0"/></linearGradient>
<path d="M841,279.5 h7 M841,282.5 h7 M841,285.5 h7" stroke="url(#pgrip)"/><path d="M841,280.5 h7 M841,283.5 h7 M841,286.5 h7" stroke="#fff" opacity="0.8"/>
  <clipPath id="lclip"><rect x="449" y="156" width="387" height="366"/></clipPath>
  <g clip-path="url(#lclip)">
  <path d="M454.2,162 h9.4 l-4.7,9 z" fill="#858585"/>
<path d="M481.2,165.6 l2.4,1.8 l-2.6,2.6z" fill="#585858"/><path d="M470.4,162 L475.4,159.1 L480.9,161.5 V168.4 L475.9,171.1 L470.4,168.6 Z" fill="#fbd048" stroke="#d4820e" stroke-width="0.8" stroke-linejoin="round"/><path d="M470.4,162 L475.4,159.1 L480.9,161.5 L475.9,164.4 Z" fill="#ffa81c"/><path d="M475.9,164.4 L480.9,161.5 V168.4 L475.9,171.1 Z" fill="#c8941a"/><path d="M475.4,159.1 L480.9,161.5 V168.4 L477.6,170.3" stroke="#8e1010" stroke-width="1" fill="none" stroke-linejoin="round"/><path d="M471.4,162.9 h1v1h-1z M475,164.6 h1v1h-1z M475,167.4 h1v1h-1z M471.4,167.6 h1v1h-1z" fill="#fff6c8"/>
<path d="M454,256 v9.6 l9,-4.8 z" fill="#8c8c8c"/>
<path d="M473.6,254.4 L478.2,252.3 L483.2,253.8 V261.6 L479.2,264.4 L473.6,262.6 Z" fill="#fafafa" stroke="#101010" stroke-width="1" stroke-linejoin="round"/><path d="M479.2,256.2 L483.2,253.8 V261.6 L479.2,264.4 Z" fill="#bcbcbc" stroke="#101010" stroke-width="0.9" stroke-linejoin="round"/><path d="M473.6,254.4 L479.2,256.2" stroke="#303030" stroke-width="0.8"/><path d="M468.6,257.6 L473,255.2 L480,257.2 V265 L476.3,267.6 L468.6,265.4 Z" fill="#3a78f0" stroke="#080808" stroke-width="1.1" stroke-linejoin="round"/><path d="M468.6,257.6 L473,255.2 L480,257.2 L476.3,259.6 Z" fill="#f4f8ff" stroke="#080808" stroke-width="0.8" stroke-linejoin="round"/><path d="M476.3,259.6 L480,257.2 V265 L476.3,267.6 Z" fill="#101010"/><path d="M469.6,259 L475.6,260.6" stroke="#9cc0ff" stroke-width="0.9"/>
<path d="M454,275 v9.6 l9,-4.8 z" fill="#8c8c8c"/>
<rect x="470.5" y="273.5" width="11" height="11" fill="#e6e6e6" stroke="#c2c2c2"/><path d="M476,275.5 v2 M476,280.5 v2 M472.5,279 h2 M477.5,279 h2" stroke="#1c38e0" stroke-width="1"/><rect x="475.3" y="278.3" width="1.4" height="1.4" fill="#1c38e0"/><path d="M476,273.4 l-1.7,2.3 h3.4z M476,284.6 l-1.7,-2.3 h3.4z M470.4,279 l2.3,-1.7 v3.4z M481.6,279 l-2.3,-1.7 v3.4z" fill="#1c38e0"/>
<path d="M454,294 v9.6 l9,-4.8 z" fill="#8c8c8c"/>
<g stroke="#2c2cf0" stroke-dasharray="1,1"><path d="M474,296.5 h9 M474,304.5 h9 M474.5,296 v9 M482.5,296 v9"/></g><path d="M474.5,290 v5.5 M482.5,290 v5.5 M468,296.5 h5.5 M468,304.5 h5.5" stroke="#c4c4c4" stroke-width="1"/><path d="M476,292.5 h1 M478,292.5 h3" stroke="#000"/><path d="M482.4,292.5 l-2.4,-1.9 v3.8z" fill="#000"/><path d="M470.5,298 v1 M470.5,300 v3" stroke="#000"/><path d="M470.5,304.4 l-1.9,-2.4 h3.8z" fill="#000"/>
<path d="M454.2,314 h9.4 l-4.7,9 z" fill="#858585"/>
<rect x="469.5" y="319.5" width="12" height="4" fill="#fff" stroke="#000"/><path d="M469,323.7 h13" stroke="#000" stroke-width="0.8"/><path d="M471,321.5 h2.6" stroke="#18b018" stroke-width="1.1"/><path d="M477,321.5 h3" stroke="#202020" stroke-width="1.1"/><text x="471.4" y="318.9" font-family="Liberation Sans, sans-serif" font-size="10.5" fill="#f01414">&amp;</text><text x="478.4" y="317.2" font-family="Liberation Sans, sans-serif" font-size="6.8" font-weight="bold" fill="#1030e0">#</text>
<path d="M622.2,335.6 l2.2,3.6 l4.2,-7.4" stroke="#3c5a96" stroke-width="1.9" fill="none" stroke-linejoin="miter"/>
<path d="M622.2,373.6 l2.2,3.6 l4.2,-7.4" stroke="#3c5a96" stroke-width="1.9" fill="none" stroke-linejoin="miter"/>
<path d="M622.2,449.6 l2.2,3.6 l4.2,-7.4" stroke="#3c5a96" stroke-width="1.9" fill="none" stroke-linejoin="miter"/>
<path d="M622.2,487.6 l2.2,3.6 l4.2,-7.4" stroke="#3c5a96" stroke-width="1.9" fill="none" stroke-linejoin="miter"/>
<path d="M622.2,506.6 l2.2,3.6 l4.2,-7.4" stroke="#3c5a96" stroke-width="1.9" fill="none" stroke-linejoin="miter"/>
<path d="M454,522 v9.6 l9,-4.8 z" fill="#8c8c8c"/>
<path d="M474,520 l6,4 l-3,0.5 l2,3 l-2,1 l-2,-3 l-2,2z" fill="#2030a0" stroke="#101040" stroke-width="0.6"/>
  </g>
  </svg>
  <div class="t" style="left:37px;top:33px;font-size:11px;letter-spacing:-0.08px;">StyledText (StyledText)</div>
</div>
<div class="abs" style="left:441px;top:547px;width:419px;height:1px;background:#c6c6c6;"></div>
</body>
</html>
